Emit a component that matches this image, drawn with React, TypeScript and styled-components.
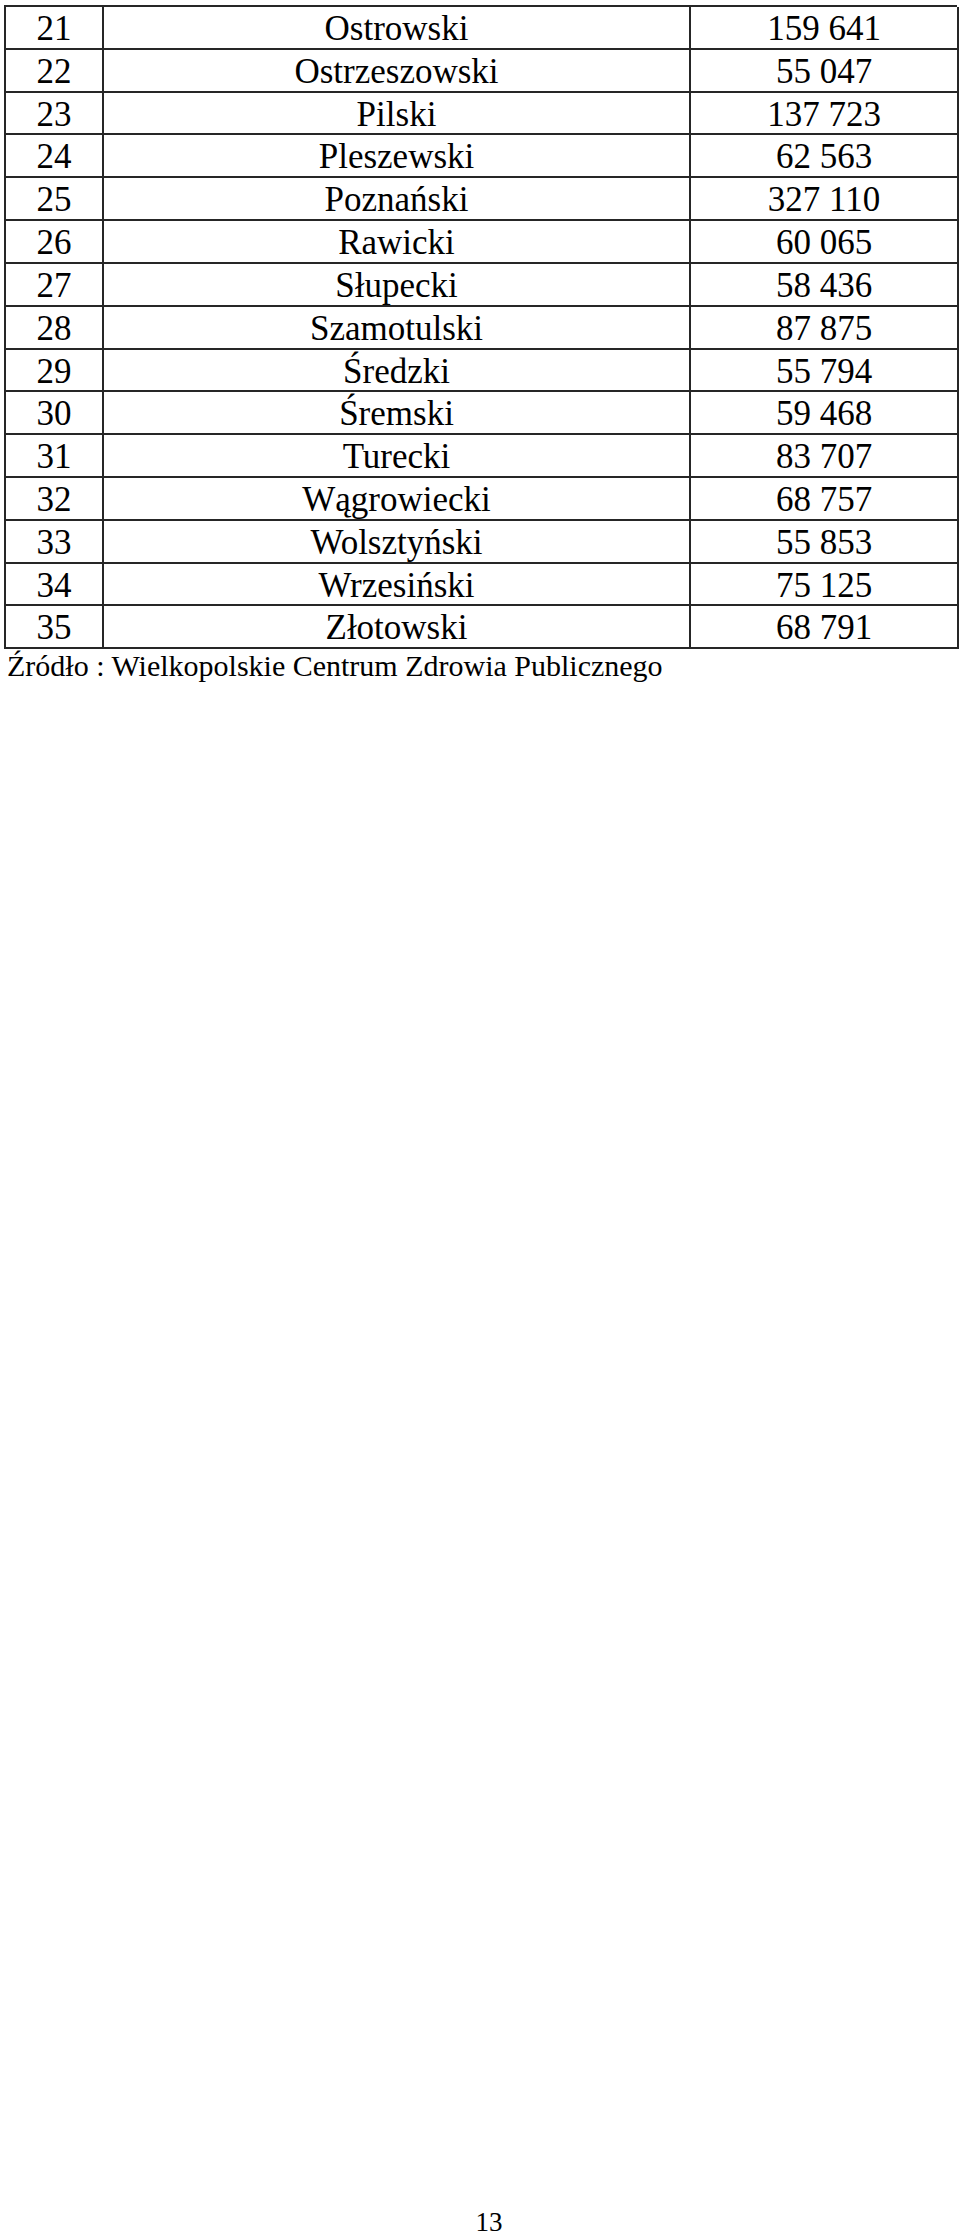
import styled, { createGlobalStyle } from "styled-components";

const GlobalStyle = createGlobalStyle`
  html, body {
    margin: 0;
    padding: 0;
    background: #ffffff;
  }
  body {
    font-family: "Liberation Serif", "Times New Roman", serif;
    color: #000000;
  }
`;

const Page = styled.div`
  display: flex;
  flex-direction: column;
  height: 2236px;
  box-sizing: border-box;
  padding-top: 5px;
  overflow: hidden;
`;

const Table = styled.div`
  display: grid;
  grid-template-columns: 98px 587px 268px;
  grid-auto-rows: 42.82px;
  margin-left: 4px;
  width: 953px;
  border-top: 2px solid #262626;
  border-left: 2px solid #262626;
  box-sizing: border-box;
`;

const Cell = styled.div`
  display: flex;
  justify-content: center;
  align-items: flex-start;
  box-sizing: border-box;
  border-right: 2px solid #262626;
  border-bottom: 2px solid #262626;
  font-size: 35px;
  line-height: 40px;
  padding-top: 2px;
  white-space: nowrap;
`;

const Source = styled.div`
  padding-left: 7px;
  font-size: 30px;
  line-height: 33px;
  white-space: nowrap;
`;

const PageNumber = styled.div`
  margin-top: auto;
  padding-left: 18px;
  text-align: center;
  font-size: 27px;
  line-height: 27px;
`;

const rows: [number, string, string][] = [
  [21, "Ostrowski", "159 641"],
  [22, "Ostrzeszowski", "55 047"],
  [23, "Pilski", "137 723"],
  [24, "Pleszewski", "62 563"],
  [25, "Poznański", "327 110"],
  [26, "Rawicki", "60 065"],
  [27, "Słupecki", "58 436"],
  [28, "Szamotulski", "87 875"],
  [29, "Średzki", "55 794"],
  [30, "Śremski", "59 468"],
  [31, "Turecki", "83 707"],
  [32, "Wągrowiecki", "68 757"],
  [33, "Wolsztyński", "55 853"],
  [34, "Wrzesiński", "75 125"],
  [35, "Złotowski", "68 791"],
];

export default function App() {
  return (
    <>
      <GlobalStyle />
      <Page>
        <Table>
          {rows.flatMap(([no, name, value]) => [
            <Cell key={`n${no}`}>{no}</Cell>,
            <Cell key={`p${no}`}>{name}</Cell>,
            <Cell key={`v${no}`}>{value}</Cell>,
          ])}
        </Table>
        <Source>Źródło : Wielkopolskie Centrum Zdrowia Publicznego</Source>
        <PageNumber>13</PageNumber>
      </Page>
    </>
  );
}
